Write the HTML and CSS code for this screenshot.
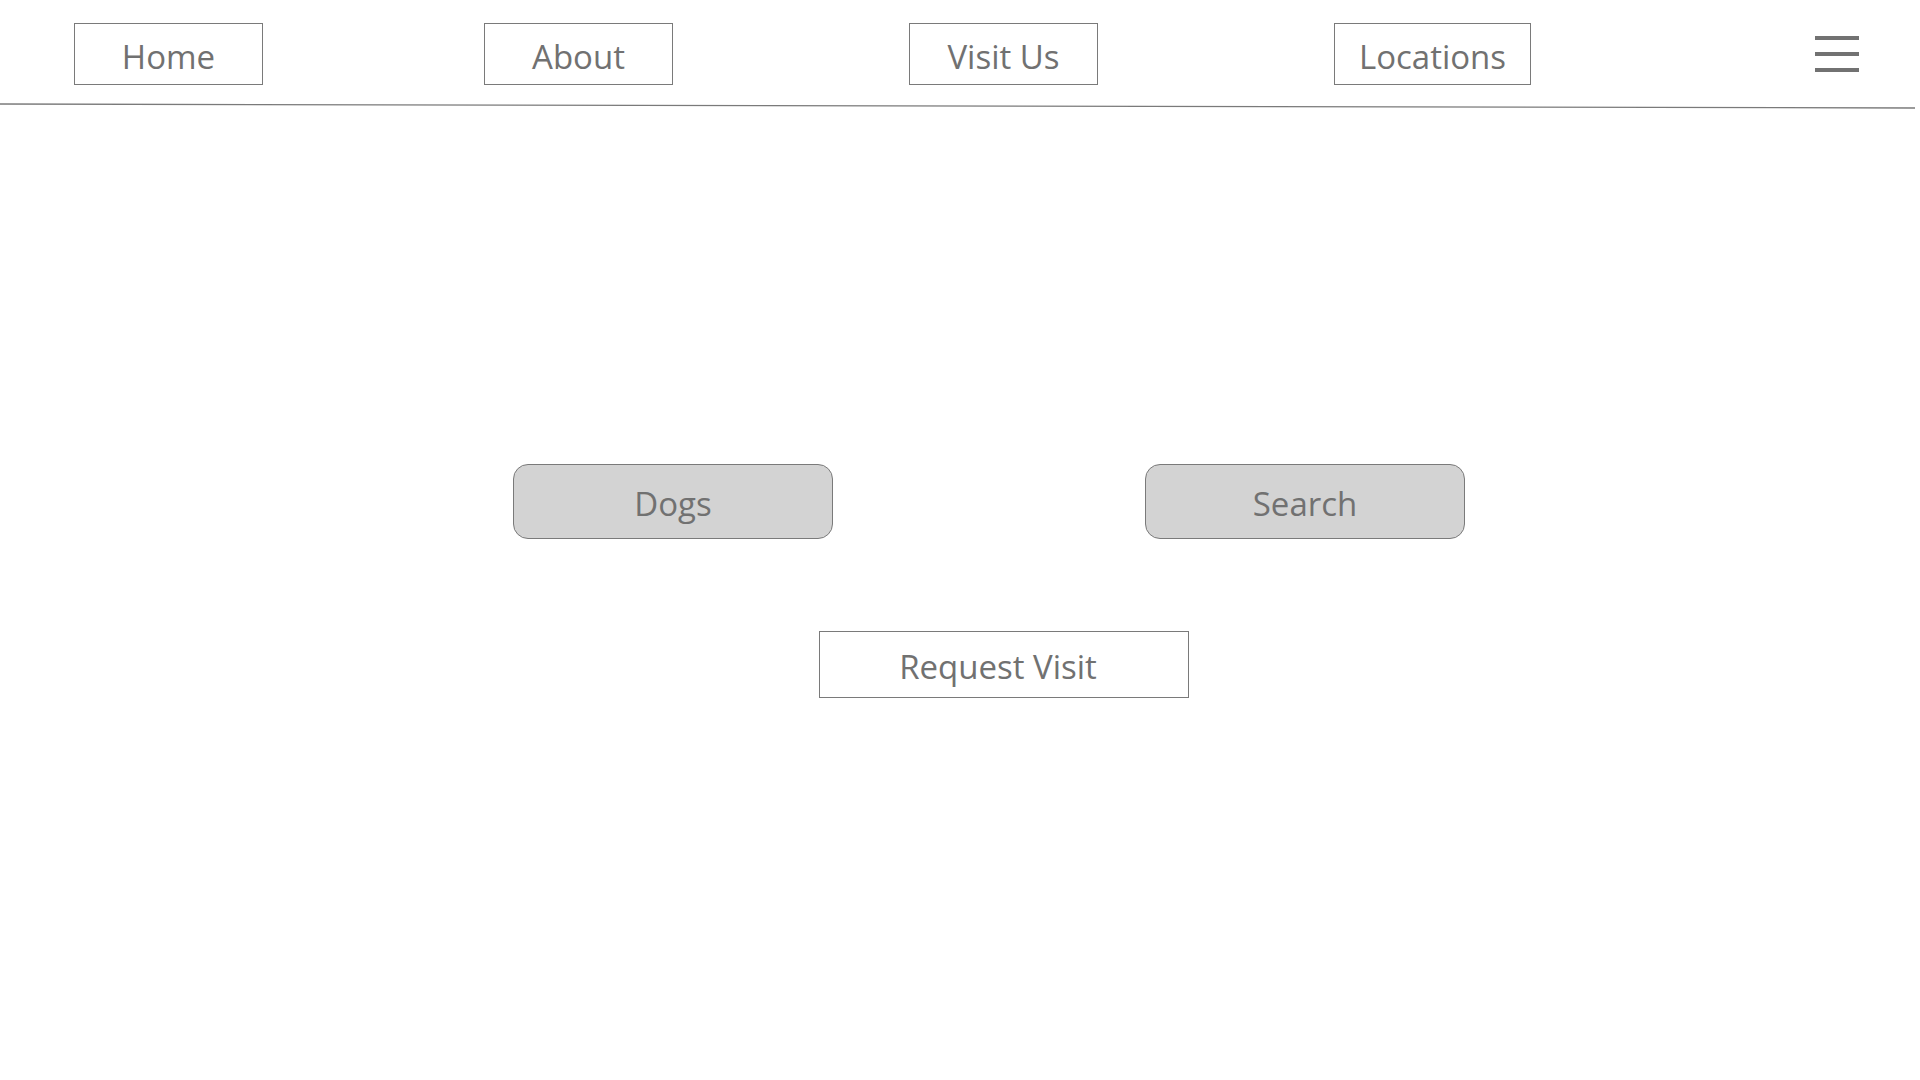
FILE: index.html
```html
<!DOCTYPE html>
<html lang="en">
<head>
<meta charset="utf-8">
<title>Wireframe</title>
<link rel="stylesheet" href="styles.css">
</head>
<body>
<header class="topbar">
  <nav class="nav">
    <a class="nav-btn nav-home">Home</a>
    <a class="nav-btn nav-about">About</a>
    <a class="nav-btn nav-visit">Visit Us</a>
    <a class="nav-btn nav-loc">Locations</a>
  </nav>
  <div class="burger" aria-label="menu">
    <span></span><span></span><span></span>
  </div>
</header>
<svg class="rule" width="1920" height="8" viewBox="0 0 1920 8">
  <line x1="0" y1="1" x2="1915" y2="5" stroke="#7a7a7a" stroke-width="1.3"/>
</svg>
<main class="main">
  <div class="pill-row">
    <button class="pill">Dogs</button>
    <button class="pill">Search</button>
  </div>
  <div class="request-row">
    <button class="request">Request Visit</button>
  </div>
</main>
</body>
</html>
```

FILE: styles.css
```css
html, body {
  margin: 0;
  padding: 0;
  background: #ffffff;
}
body {
  width: 1920px;
  height: 1080px;
  overflow: hidden;
  font-family: "Open Sans", "Noto Sans", "DejaVu Sans", sans-serif;
  font-weight: 400;
  color: #717171;
}
.topbar {
  display: flex;
  align-items: flex-start;
  height: 103px;
  box-sizing: border-box;
  padding-top: 23px;
}
.nav {
  display: flex;
  padding-left: 74px;
}
.nav-btn {
  box-sizing: border-box;
  height: 62px;
  border: 1px solid #7a7a7a;
  display: flex;
  align-items: center;
  justify-content: center;
  padding-top: 4px;
  font-size: 33px;
  color: #717171;
  text-decoration: none;
}
.nav-home { width: 189px; }
.nav-about { width: 189px; margin-left: 221px; }
.nav-visit { width: 189px; margin-left: 236px; }
.nav-loc { width: 197px; margin-left: 236px; }
.burger {
  margin-left: auto;
  margin-right: 61px;
  margin-top: 13px;
  width: 44px;
  display: flex;
  flex-direction: column;
  gap: 12px;
}
.burger span {
  display: block;
  height: 4px;
  background: #727272;
}
.rule {
  display: block;
}
.main {
  padding-top: 353px;
}
.pill-row {
  display: flex;
  gap: 312px;
  padding-left: 513px;
}
.pill {
  box-sizing: border-box;
  width: 320px;
  height: 75px;
  border: 1px solid #7a7a7a;
  border-radius: 15px;
  background: #d3d3d3;
  font-family: inherit;
  font-weight: 400;
  font-size: 33px;
  color: #717171;
  padding: 4px 0 0;
}
.request-row {
  padding-left: 819px;
  padding-top: 92px;
}
.request {
  box-sizing: border-box;
  width: 370px;
  height: 67px;
  border: 1px solid #7a7a7a;
  background: #ffffff;
  font-family: inherit;
  font-weight: 400;
  font-size: 33px;
  color: #717171;
  padding: 4px 12px 0 0;
}
```
